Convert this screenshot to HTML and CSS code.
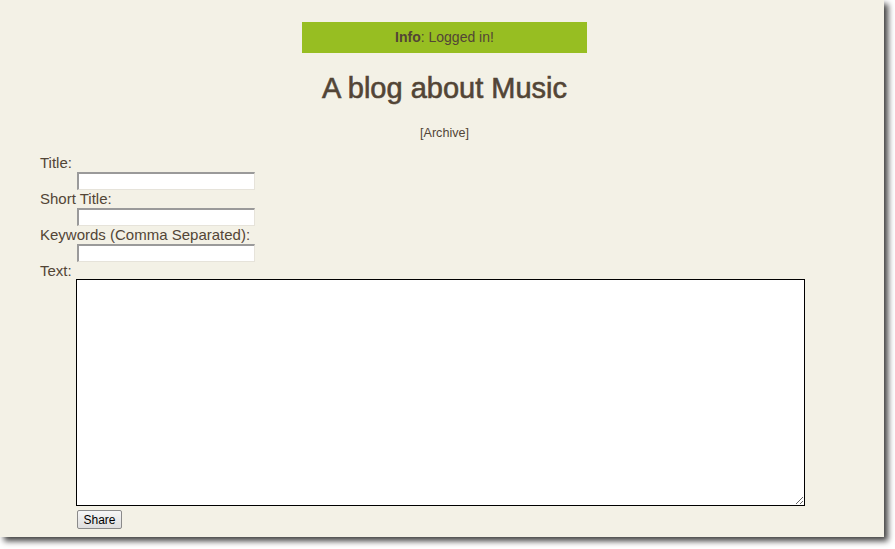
FILE: index.html
```html
<!DOCTYPE html>
<html>
<head>
<meta charset="utf-8">
<title>A blog about Music</title>
<link rel="stylesheet" href="styles.css">
</head>
<body>
<div class="window">
  <header class="head">
    <div class="info"><b>Info</b>: Logged in!</div>
    <h1 class="title">A blog about Music</h1>
    <nav class="nav">[<a href="#">Archive</a>]</nav>
  </header>
  <form class="form">
    <label class="lbl">Title:</label>
    <input class="field" type="text">
    <label class="lbl">Short Title:</label>
    <input class="field" type="text">
    <label class="lbl">Keywords (Comma Separated):</label>
    <input class="field" type="text">
    <label class="lbl">Text:</label>
    <textarea class="text"></textarea>
    <button class="btn" type="button">Share</button>
  </form>
</div>
</body>
</html>
```
FILE: styles.css
```css
html, body {
  margin: 0;
  padding: 0;
  background: #ffffff;
}
body {
  width: 895px;
  height: 549px;
  overflow: hidden;
}
.window {
  width: 884px;
  height: 537px;
  background: #f3f1e6;
  box-shadow: 4px 4px 6px rgba(0, 0, 0, 0.75);
  font-family: "Liberation Sans", Arial, sans-serif;
  color: #524536;
  overflow: hidden;
}
.head {
  display: flex;
  flex-direction: column;
  align-items: center;
  padding-top: 22px;
  padding-left: 5px;
}
.info {
  width: 285px;
  height: 31px;
  line-height: 31px;
  background: #97be22;
  text-align: center;
  font-size: 14px;
}
.info b {
  font-weight: bold;
}
.title {
  margin: 16px 0 0 0;
  font-size: 29px;
  font-weight: normal;
  line-height: 38px;
  -webkit-text-stroke: 0.6px #524536;
}
.nav {
  margin-top: 19px;
  font-size: 12.6px;
  line-height: 14px;
}
.nav a {
  color: #524536;
  text-decoration: none;
}
.form {
  display: flex;
  flex-direction: column;
  align-items: flex-start;
  padding: 14px 0 0 40px;
}
.lbl {
  font-size: 15px;
  line-height: 18px;
  height: 18px;
}
.field {
  box-sizing: border-box;
  margin: 0 0 0 37px;
  width: 178px;
  height: 18px;
  background: #ffffff;
  border-style: solid;
  border-width: 2px 1px 1px 2px;
  border-color: #9a9a9a #e6e3da #e6e3da #9a9a9a;
  padding: 0;
}
.text {
  box-sizing: border-box;
  margin: -1px 0 0 36px;
  width: 729px;
  height: 227px;
  border: 1px solid #000000;
  background: #ffffff;
  padding: 2px;
}
.btn {
  margin: 4px 0 0 37px;
  height: 19px;
  width: 45px;
  padding: 0;
  font-family: "Liberation Sans", Arial, sans-serif;
  font-size: 12px;
  color: #000000;
  background: linear-gradient(#f6f6f6, #dedede);
  border: 1px solid #8a8a8a;
  border-radius: 2px;
}
```
